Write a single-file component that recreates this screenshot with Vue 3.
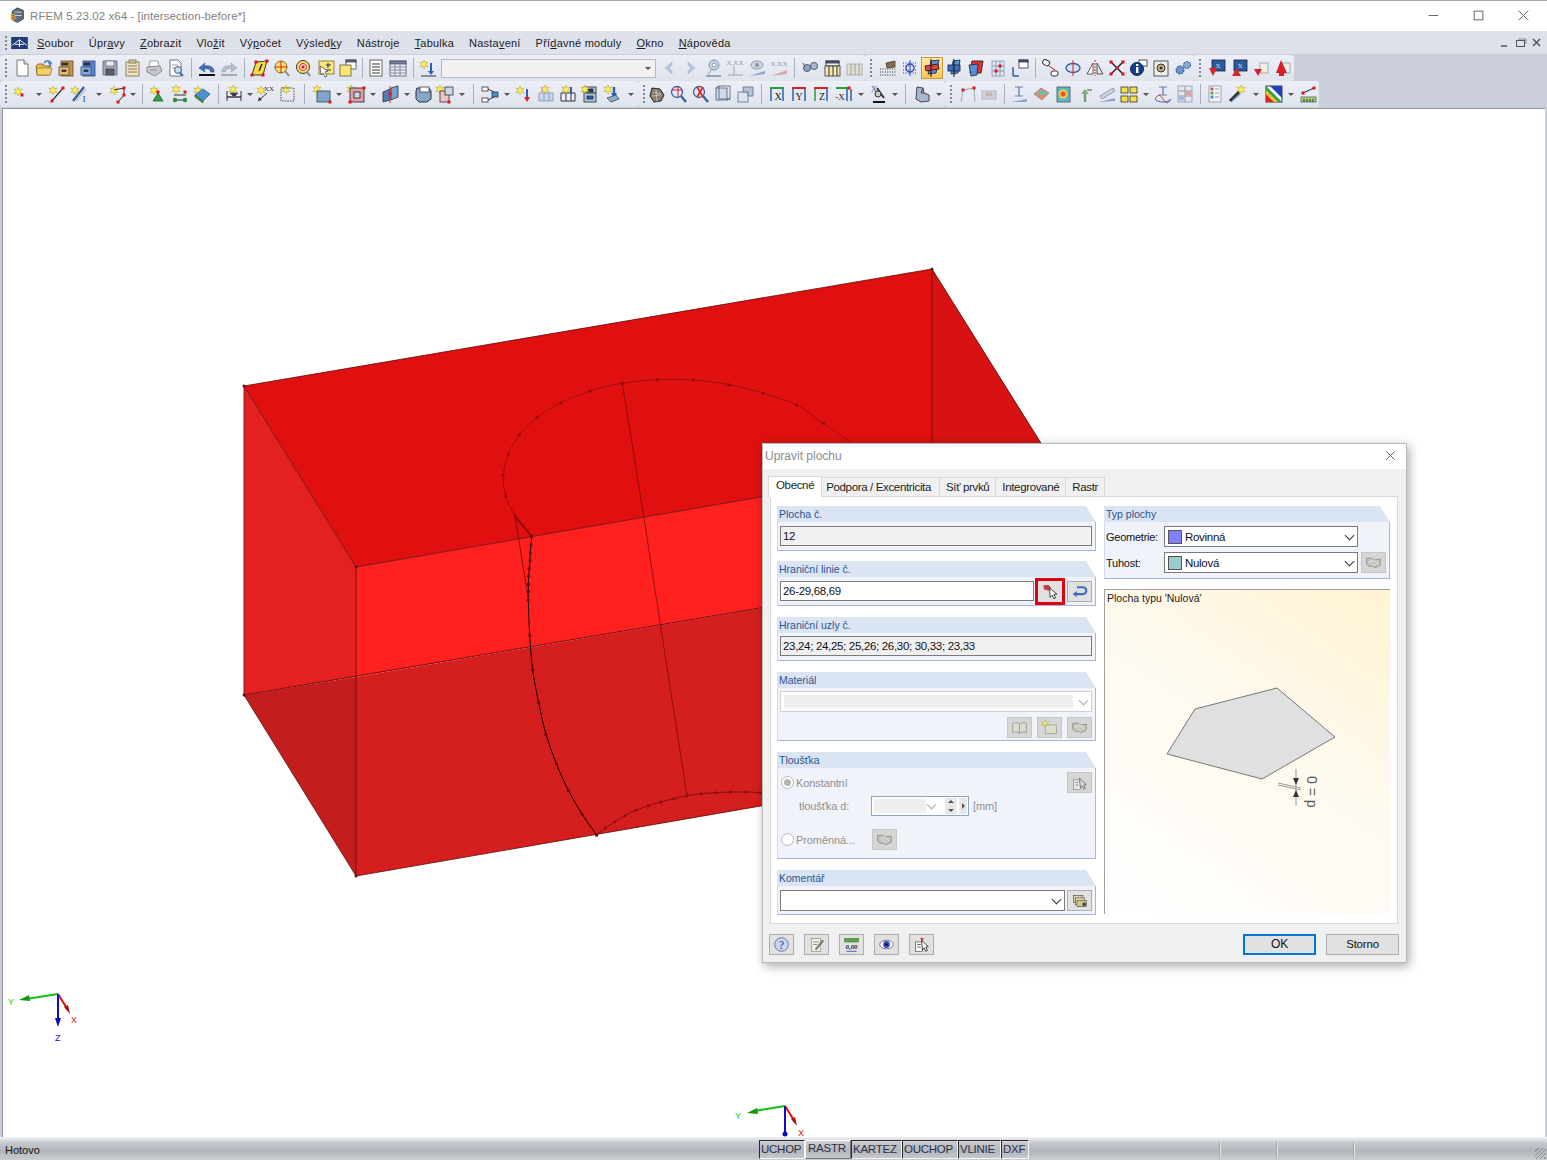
<script setup>
// helpers for the small toolbar pictures (20x20 box)
const st = (x, y) => `<path d="M${x} ${y - 4}l1.2 2.8 2.8-.8-1.6 2.4 1.6 2.4-2.8-.8-1.2 2.8-1.2-2.8-2.8.8 1.6-2.4-1.6-2.4 2.8.8z" fill="#ffee55" stroke="#a89a30" stroke-width=".5"/>`
const nd = (x, y) => `<rect x="${x - 1.5}" y="${y - 1.5}" width="3" height="3" fill="#e0141c"/>`
const txt = (x, y, t, c = '#333', s = 7) => `<text x="${x}" y="${y}" font-size="${s}" font-family="Liberation Serif" fill="${c}" text-anchor="middle">${t}</text>`
const ln = (a, b, c, d, col = '#333', w = 1) => `<line x1="${a}" y1="${b}" x2="${c}" y2="${d}" stroke="${col}" stroke-width="${w}"/>`
const box = (x, y, w, h, f, s = '#555') => `<rect x="${x}" y="${y}" width="${w}" height="${h}" fill="${f}" stroke="${s}" stroke-width=".8"/>`
const poly = (p, f, s = '#555') => `<polygon points="${p}" fill="${f}" stroke="${s}" stroke-width=".8"/>`
const hand = '<path d="M2 5h6l3 2 7-1v7l-6 3-4-2-2 1-4-3z" fill="#c4c4bc" stroke="#7c7c78"/><path d="M5 10l5-3 6 5M8 12l3 2" fill="none" stroke="#f2f2f2"/>'

const icons = {
  doc: '<path d="M5 2h7l4 4v12H5z" fill="#fff" stroke="#777"/><path d="M12 2v4h4" fill="#ddd" stroke="#777"/>',
  folder: '<path d="M2 8l2-2h5l1 2h6v9H3z" fill="#e8bc44" stroke="#94702a"/><path d="M3 10h15l-2 7H3z" fill="#f4d36a" stroke="#94702a" stroke-width=".7"/><path d="M10 5c2-3 5-3 7 0l-2 0 2 3" fill="none" stroke="#3f78c8" stroke-width="1.4"/>',
  drawer: box(5, 3, 12, 15, '#c09355', '#6e4a20') + box(3, 9, 10, 8, '#e2bb7c', '#6e4a20') + box(6, 5, 6, 2, '#333', '#333') + box(6, 12, 4, 1.5, '#333', '#333'),
  cabinet: box(5, 3, 12, 15, '#5b82c6', '#2d4d85') + box(3, 9, 10, 8, '#86a8e0', '#2d4d85') + box(6, 5, 6, 2, '#234', '#234') + box(6, 12, 4, 1.5, '#234', '#234'),
  save: box(3, 3, 14, 14, '#9ea8bd', '#5a6478') + box(6, 3, 8, 5, '#eee', '#777') + box(6, 11, 8, 6, '#555d70', '#444'),
  notes: box(4, 4, 13, 14, '#efe3c4', '#7a6a44') + box(7, 2, 7, 3, '#d0c6a8', '#7a6a44') + ln(6, 8, 15, 8, '#8a7a55') + ln(6, 11, 15, 11, '#8a7a55') + ln(6, 14, 15, 14, '#8a7a55'),
  print: poly('6,3 14,3 15,9 5,9', '#fff', '#888') + poly('3,9 16,8 18,13 11,18 3,14', '#c8c8d0', '#777') + ln(6, 12, 13, 12, '#888'),
  preview: '<path d="M4 2h8l3 3v13H4z" fill="#fff" stroke="#777"/>' + ln(6, 7, 12, 7, '#999') + ln(6, 10, 10, 10, '#999') + '<circle cx="12" cy="12" r="3.4" fill="#c6def5" stroke="#456"/>' + ln(14, 15, 17, 18, '#3a6ab0', 2),
  undo: '<path d="M17 14c0-5-4-7-10-6l1-3-6 5 6 4-1-3c4-1 6 0 7 3z" fill="#3f71bd" stroke="#27487c" stroke-width=".6"/>' + ln(2, 17, 18, 17, '#111', 2),
  redo: '<path d="M3 14c0-5 4-7 10-6l-1-3 6 5-6 4 1-3c-4-1-6 0-7 3z" fill="#b6c0d2" stroke="#8f99ac" stroke-width=".6"/>' + ln(2, 17, 18, 17, '#aaa', 2),
  para: poly('6,4 17,3 13,17 2,17', '#f3da48', '#111') + nd(6, 4) + nd(2, 17) + nd(13, 17) + nd(17, 3) + ln(9, 13, 12, 6, '#222', 1.4),
  target: '<circle cx="9" cy="9" r="6" fill="#f6e26a" stroke="#7a6a20"/>' + ln(3, 9, 15, 9, '#d22') + ln(9, 3, 9, 15, '#d22') + ln(13, 13, 17, 18, '#888', 2),
  target2: '<circle cx="9" cy="9" r="6.5" fill="#f6e26a" stroke="#333"/><circle cx="9" cy="9" r="3.5" fill="#fff" stroke="#c22"/>' + nd(9, 9) + ln(13, 14, 16, 18, '#888', 2),
  plus: box(3, 3, 15, 13, '#f6e77d', '#7a6a20') + ln(12, 5, 12, 10, '#333') + ln(10, 7, 15, 7, '#333') + ln(10, 12, 15, 12, '#333') + '<path d="M4 8l1 9 2-2 2 4 2-1-2-4 3-1z" fill="#fff" stroke="#333" stroke-width=".7"/>',
  windows: box(8, 2, 10, 9, '#fff', '#444') + box(8, 2, 10, 2, '#4a6fb0', '#444') + box(2, 7, 11, 11, '#f8e67c', '#6a5c20'),
  list: box(4, 2, 12, 16, '#fff', '#444') + ln(6, 6, 14, 6) + ln(6, 9, 14, 9) + ln(6, 12, 14, 12) + ln(6, 15, 14, 15),
  table: box(2, 3, 16, 15, '#eef', '#556') + box(2, 3, 16, 3, '#6f7f9f', '#556') + ln(2, 9, 18, 9, '#889') + ln(2, 12, 18, 12, '#889') + ln(2, 15, 18, 15, '#889') + ln(7, 6, 7, 18, '#889') + ln(12, 6, 12, 18, '#889'),
  starDown: st(6, 6) + ln(13, 5, 13, 14, '#2d5fb0', 2) + '<path d="M10 13h6l-3 4z" fill="#2d5fb0"/>' + ln(3, 18, 18, 18, '#333'),
  back: '<path d="M13 4l-7 6 7 6v-3l-3-3 3-3z" fill="#b9c8e4" stroke="#9fb1d2" stroke-width=".6"/>',
  fwd: '<path d="M7 4l7 6-7 6v-3l3-3-3-3z" fill="#b9c8e4" stroke="#9fb1d2" stroke-width=".6"/>',
  bubble: '<circle cx="11" cy="7" r="5" fill="#ccd8e8" stroke="#7e90ac"/><circle cx="11" cy="7" r="2" fill="#fff" stroke="#7e90ac"/>' + ln(3, 18, 18, 18, '#98a4b8', 2) + ln(9, 10, 5, 17, '#98a4b8'),
  xxDown: txt(10, 7, 'X.XX', '#8f96a3') + ln(9, 8, 9, 16, '#98a4b8') + ln(3, 17, 18, 17, '#98a4b8'),
  eyeLine: '<ellipse cx="10" cy="7" rx="6" ry="4" fill="#d0d7e2" stroke="#8d97a8"/><circle cx="10" cy="7" r="2" fill="#8a94a6"/><path d="M2 18l16-5v3z" fill="#8fa4d0"/>',
  xxLine: txt(10, 8, 'X.XX', '#8f96a3') + '<path d="M2 18l16-6v4z" fill="#d9a8a8"/>',
  glasses: '<circle cx="7" cy="10" r="3.5" fill="#8ea6c6" stroke="#556"/><circle cx="14" cy="8" r="3.5" fill="#a9bbd4" stroke="#556"/>' + ln(3, 5, 5, 9, '#556'),
  bars: box(4, 3, 13, 5, '#eee', '#333') + box(4, 3, 13, 2, '#3f5fa0', '#333') + box(3, 8, 15, 10, '#f4e8b0', '#333') + ln(7, 8, 7, 18) + ln(11, 8, 11, 18) + ln(15, 8, 15, 18),
  barsOff: box(3, 6, 15, 11, '#e4dfc8', '#9aa3b4') + ln(7, 6, 7, 17, '#9aa3b4') + ln(11, 6, 11, 17, '#9aa3b4') + ln(15, 6, 15, 17, '#9aa3b4'),
  dots: '<path d="M2 14h16M2 11h16M2 17h16" stroke="#333" stroke-dasharray="1 1.4"/>' + poly('8,5 17,3 17,9 9,10', '#8a6a50', '#4a3a2a'),
  gridDot: '<path d="M3 5h14M3 8h14M3 12h14M3 15h14" stroke="#2c3e7e" stroke-dasharray="1 1.4"/>' + '<circle cx="10" cy="10" r="4" fill="none" stroke="#2c4fc0" stroke-width="1.4"/>' + ln(10, 2, 10, 18, '#2c4fc0'),
  viewOn: poly('9,3 17,2 14,15 6,16', '#5c8dd6', '#123') + poly('3,8 16,6 17,11 4,13', '#e04040', '#111') + ln(9, 1, 9, 19, '#111'),
  viewA: poly('9,3 16,2 14,15 7,16', '#5c8dd6', '#123') + box(4, 7, 12, 6, '#3b6fc2', '#123') + ln(10, 1, 10, 19, '#111'),
  viewB: poly('6,3 17,3 15,15 4,15', '#e63434', '#111') + poly('3,7 12,6 11,17 5,18', '#5c8dd6', '#123'),
  gridRed: box(4, 3, 12, 15, '#dfe6f4', '#8a97b0') + ln(8, 3, 8, 18, '#8a97b0') + ln(12, 3, 12, 18, '#8a97b0') + ln(4, 8, 16, 8, '#8a97b0') + ln(4, 13, 16, 13, '#8a97b0') + nd(8, 13) + nd(12, 8),
  tag: box(9, 2, 9, 8, '#fff', '#334') + box(9, 2, 9, 2, '#3a5f9e', '#334') + '<path d="M3 18V9M3 18h6" stroke="#335f9e" stroke-width="1.5" fill="none"/>',
  chain: '<rect x="2" y="2" width="7" height="5" rx="2" transform="rotate(30 5 4)" fill="#fff" stroke="#333"/>' + '<rect x="10" y="13" width="7" height="5" rx="2" fill="#fff" stroke="#333"/>' + ln(8, 8, 14, 12, '#d22'),
  rotate: '<ellipse cx="10" cy="10" rx="7" ry="4.5" fill="#d5e0f0" stroke="#3a5fa8" stroke-width="1.4"/>' + ln(10, 2, 10, 18, '#d22'),
  mirror: poly('2,16 8,5 8,16', '#fff', '#333') + poly('12,5 18,16 12,16', '#dce2ee', '#333') + '<path d="M10 2v16" stroke="#d22" stroke-dasharray="2 1"/>',
  cross: ln(4, 4, 16, 16, '#111', 1.2) + ln(16, 4, 4, 16, '#111', 1.2) + nd(4, 4) + nd(16, 4) + nd(4, 16) + nd(16, 16) + nd(10, 10),
  info: box(10, 2, 8, 6, '#fff', '#333') + '<circle cx="8" cy="11" r="6.5" fill="#123f8e" stroke="#0c2a60"/><rect x="7" y="9" width="2.4" height="6" fill="#fff"/><rect x="7" y="6" width="2.4" height="2" fill="#fff"/>',
  gear: box(3, 3, 14, 15, '#eee', '#333') + '<circle cx="10" cy="10" r="4" fill="#d0b070" stroke="#333"/><circle cx="10" cy="10" r="1.5" fill="#335"/>',
  gears: '<circle cx="7" cy="12" r="4" fill="#6f93c8" stroke="#2d4a80" stroke-dasharray="2 1"/><circle cx="14" cy="7" r="3.5" fill="#8ba8d6" stroke="#2d4a80" stroke-dasharray="2 1"/>',
  load1: box(5, 2, 13, 11, '#2c5aa0', '#123') + txt(11, 10, 'X', '#cde') + '<path d="M2 10h8l-4 8z" fill="#e0202a"/>',
  load2: box(5, 2, 13, 11, '#2c5aa0', '#123') + txt(11, 10, 'X', '#cde') + '<path d="M3 18h9l-4.500-8z" fill="#e0202a"/>',
  redA: box(9, 5, 8, 10, '#f2efe6', '#999') + '<path d="M8 2v9h-5l4 7 4-7h-3z" fill="#d91e26"/>',
  redB: box(9, 5, 8, 10, '#f2efe6', '#999') + '<path d="M8 2l-5 13h3v3h5v-3h3z" fill="#d91e26"/>',

  node: st(7, 7) + nd(11, 11),
  lineS: st(6, 6) + ln(5, 17, 16, 4, '#333', 1.2) + nd(5, 17) + nd(16, 4),
  member: st(6, 6) + ln(4, 17, 15, 3, '#3f5f98', 2.4) + ln(7, 17, 17, 5, '#9ab', 1) + txt(15, 18, 'I', '#234', 8),
  polyl: st(6, 6) + '<path d="M6 6l10-2v7l-6 7" fill="none" stroke="#333"/>' + nd(16, 4) + nd(16, 11) + nd(10, 18),
  support: st(6, 6) + poly('5,17 10,9 15,17', '#38a048', '#1c6028') + nd(10, 8),
  tree: st(6, 5) + ln(4, 11, 16, 11) + ln(5, 16, 15, 16) + '<circle cx="5" cy="16" r="2.2" fill="#2e8c3e"/><circle cx="15" cy="16" r="2.2" fill="#2e8c3e"/>' + nd(15, 8),
  greenS: st(6, 6) + poly('3,11 11,5 18,10 11,17', '#4f90d0', '#2c5a84') + poly('3,11 11,17 11,19 3,13', '#4aa048', '#2c6a30'),
  dim: st(9, 5) + ln(3, 7, 3, 17) + ln(17, 7, 17, 17) + ln(3, 13, 17, 13, '#111', 1.2) + poly('6,9 14,9 10,13', '#333'),
  xx: st(6, 6) + txt(14, 7, 'XX') + ln(3, 17, 12, 9) + '<path d="M3 17l1-4 3 3z" fill="#333"/>',
  dotted: st(9, 5) + '<rect x="4" y="4" width="13" height="13" fill="none" stroke="#444" stroke-dasharray="1.4 1.2"/>',
  surfS: st(5, 5) + box(5, 7, 13, 11, '#7ea6c8', '#345') + nd(18, 18),
  holeS: st(5, 5) + box(4, 4, 14, 14, '#e2a0a0', '#223') + box(8, 8, 6, 6, '#c9d6e8', '#223') + nd(4, 18) + nd(18, 4),
  blueS: poly('3,8 10,5 10,16 3,18', '#4f7fb8', '#234') + poly('11,4 18,2 18,13 11,16', '#7aa0cc', '#234') + nd(10, 10) + ln(10, 2, 10, 19, '#d22'),
  solid: '<path d="M4 4h12l2 3v8l-4 3H6l-3-3V7z" fill="#8aa4c6" stroke="#234"/>' + box(7, 3, 9, 5, '#fff', '#345'),
  solids: st(5, 5) + box(5, 7, 9, 11, '#e8c4c4', '#333') + box(10, 3, 8, 8, '#cdd8e8', '#333') + nd(14, 18),
  flow: box(2, 3, 6, 4, '#fff', '#333') + box(2, 14, 6, 4, '#fff', '#333') + box(12, 8, 6, 5, '#4a90d8', '#234') + ln(8, 5, 14, 8) + ln(8, 16, 14, 13),
  arrowS: st(6, 6) + ln(13, 5, 13, 15, '#2d5fb0', 2) + '<path d="M10 13h6l-3 5z" fill="#d22"/>',
  gridG: '<path d="M3 9h14v8H3zM8 9v8M13 9v8" fill="#ccd6e8" stroke="#8ea0c0"/>' + st(9, 5) + ln(6, 3, 6, 9, '#e09a9a'),
  grid: '<path d="M3 9h14v8H3zM8 9v8M13 9v8" fill="#eef" stroke="#334"/>' + st(8, 5) + ln(13, 3, 13, 9, '#2d5fb0', 2),
  frame: box(4, 3, 12, 15, '#b8c6dc', '#223') + ln(4, 9, 16, 9, '#223') + box(7, 5, 6, 3, '#234', '#234') + box(7, 12, 6, 3, '#2d5fb0', '#234') + st(5, 5),
  loadB: st(6, 5) + ln(12, 3, 12, 11, '#2d5fb0', 2.4) + '<path d="M9 9h6l-3 5z" fill="#2d5fb0"/>' + poly('5,14 14,11 17,15 9,18', '#8fb0d0', '#345'),
  tool: '<path d="M5 4l8 1 4 6-3 6-7 1-4-6z" fill="#8b7a6e" stroke="#222"/><path d="M6 8l8 2M5 12l9-1M9 5l1 13" stroke="#ddd" stroke-width=".6"/>',
  zoomR: '<circle cx="8" cy="8" r="5.5" fill="#dfe9f6" stroke="#3a5f9e" stroke-width="1.3"/>' + ln(12, 12, 17, 18, '#3a5f9e', 2.4) + ln(3, 6, 13, 6, '#d22') + ln(9, 2, 9, 13, '#d22'),
  zoomX: '<circle cx="8" cy="8" r="5.5" fill="#dfe9f6" stroke="#3a5f9e" stroke-width="1.3"/>' + ln(12, 12, 17, 18, '#3a5f9e', 2.4) + ln(6, 3, 12, 13, '#d22', 1.6) + ln(12, 3, 6, 13, '#d22', 1.6),
  cube: box(3, 4, 11, 12, '#cfd9e8', '#4d5e78') + box(6, 2, 11, 13, 'none', '#4d5e78') + ln(3, 4, 6, 2, '#4d5e78') + ln(14, 16, 17, 15, '#4d5e78'),
  cubes: box(3, 8, 10, 10, '#dde4f0', '#5c6c85') + poly('8,3 18,3 18,12 13,12 13,8 8,8', '#b4c2d8', '#5c6c85'),
  axX: '<path d="M4 17V5M16 17V5" stroke="#2d5fb0" stroke-width="1.5"/><path d="M3 4h14" stroke="#2a9e3a" stroke-width="2"/>' + txt(11, 16, 'X', '#222', 10),
  axY: '<path d="M4 17V5M16 17V5" stroke="#2d5fb0" stroke-width="1.5"/><path d="M3 4h14" stroke="#d22" stroke-width="2"/>' + txt(10, 16, 'Y', '#222', 10),
  axZ: '<path d="M4 17V5" stroke="#2a9e3a" stroke-width="1.5"/><path d="M16 17V5" stroke="#2d5fb0" stroke-width="1.5"/><path d="M3 4h14" stroke="#d22" stroke-width="2"/>' + txt(11, 16, 'Z', '#222', 10),
  axNeg: '<path d="M14 17V5M18 17V5" stroke="#2d5fb0" stroke-width="1.5"/><path d="M3 4h14" stroke="#2a9e3a" stroke-width="2"/>' + txt(7, 16, '-X', '#222', 9) + nd(16, 4),
  iso: txt(6, 8, 'X', '#2d5fb0', 9) + ln(9, 4, 16, 14, '#333', 2) + ln(5, 18, 17, 18, '#111', 2) + '<circle cx="10" cy="10" r="3" fill="#ccc" stroke="#333"/>',
  shape3d: '<path d="M5 3l6 1 1 5 5 2v6l-8 1-5-3z" fill="#a8b8cc" stroke="#445"/><path d="M11 4l-2 5 3 0" fill="none" stroke="#445"/>',
  gateG: '<path d="M4 18L6 6l11-2 1 14" fill="none" stroke="#9aa"/>' + nd(6, 6) + nd(17, 4),
  pillG: box(3, 7, 14, 8, '#d0d4dc', '#aab') + box(7, 9, 6, 3, '#d9a8a8', '#bbb'),
  lineT: ln(10, 3, 10, 12, '#6a84b0', 1.4) + ln(6, 3, 14, 3, '#6a84b0') + ln(6, 12, 14, 12, '#6a84b0') + '<path d="M2 18l16-3v3z" fill="#8aa4d8"/>',
  fill: poly('3,10 10,4 18,9 11,16', '#f08a5a', '#6a90c0') + '<ellipse cx="11" cy="9" rx="4" ry="2.500" fill="#6fc0a0"/>',
  cubeC: box(4, 3, 13, 15, '#5fb8c8', '#456') + '<circle cx="10" cy="10" r="4.500" fill="#f0d040"/><circle cx="10" cy="10" r="2.500" fill="#e85030"/>',
  arrG: '<path d="M10 18V9" stroke="#7a9a7a" stroke-width="2.500"/><path d="M6 10l4-5 4 5z" fill="#7ab07a"/><path d="M12 6h5" stroke="#88a888" stroke-width="2"/>',
  slant: '<path d="M2 18l16-4v3z" fill="#8aa4d8"/>' + poly('3,12 16,4 18,7 5,15', '#c6d2e2', '#7c8ca6'),
  yellow4: box(2, 3, 7, 6, '#f4e04a', '#333') + box(11, 3, 7, 6, '#f4e04a', '#333') + box(2, 12, 7, 6, '#f4e04a', '#333') + box(11, 12, 7, 6, '#f4e04a', '#333'),
  sine: ln(10, 3, 10, 11, '#6a84b0', 1.4) + ln(6, 3, 14, 3, '#6a84b0') + ln(6, 11, 14, 11, '#6a84b0') + '<path d="M2 15c3-5 5-5 8 0s5 5 8 0" fill="none" stroke="#d04040"/>' + '<path d="M2 15c3 4 13 4 16 0" fill="none" stroke="#4060c0"/>',
  tableC: box(3, 2, 14, 16, '#e4e8ee', '#8f99aa') + ln(3, 7, 17, 7, '#8f99aa') + ln(3, 12, 17, 12, '#8f99aa') + ln(10, 2, 10, 18, '#8f99aa') + box(11, 8, 5, 3, '#e0a0a0', '#e0a0a0') + box(4, 13, 5, 3, '#a0b8e0', '#a0b8e0'),
  legend: box(4, 2, 12, 16, '#f4f4f4', '#8a94a4') + box(6, 4, 2, 2, '#d44', '#d44') + box(6, 8, 2, 2, '#4a4', '#4a4') + box(6, 12, 2, 2, '#48c', '#48c') + ln(10, 5, 14, 5, '#999') + ln(10, 9, 14, 9, '#999') + ln(10, 13, 14, 13, '#999'),
  pencil: st(14, 5) + ln(3, 17, 12, 8, '#333', 3) + ln(5, 17, 13, 10, '#6a90c8', 1.4),
  rainbow: box(2, 2, 16, 16, '#fff', '#111') + poly('2,18 2,10 10,18', '#e02020', 'none') + poly('2,10 2,6 14,18 10,18', '#f0c020', 'none') + poly('2,6 2,2 18,18 14,18', '#30a040', 'none') + poly('6,2 18,2 18,14', '#2040c0', 'none'),
  ruler: box(3, 13, 15, 5, '#a8d070', '#567') + ln(5, 9, 16, 4, '#222') + nd(5, 9) + nd(16, 4) + ln(6, 15, 6, 18) + ln(9, 15, 9, 18) + ln(12, 15, 12, 18) + ln(15, 15, 15, 18),

  // tlacitka v dialogu
  pick: '<path d="M2 3l6 0 2 3-3 3-2-2-2 1z" fill="#d2303e" stroke="#a02a34" stroke-width=".6"/>' + '<path d="M9 6l.5 11 2.500-2.500 2 4 2-1-2-4 3.500-.5z" fill="#fff" stroke="#222"/>',
  loop: '<path d="M7 5h7a3.500 3.500 0 0 1 0 8H5" fill="none" stroke="#3f6cc4" stroke-width="2.600"/><path d="M7 9.500l-5 3.500 5 3.500z" fill="#3f6cc4"/>',
  book: '<path d="M2 5c3-1 6-1 8 1 2-2 5-2 8-1v11c-3-1-6-1-8 1-2-2-5-2-8-1z" fill="#dcdcd0" stroke="#8a8a80"/>' + ln(10, 6, 10, 17, '#8a8a80'),
  newWin: st(5, 5) + box(5, 7, 13, 10, '#dedfc8', '#888'),
  hand,
  pickDoc: box(3, 7, 8, 11, '#eee', '#777') + ln(5, 10, 9, 10, '#777') + ln(5, 13, 9, 13, '#777') + '<path d="M10 5l1 11 2-2 2 4 2-1-2-4 3-.5z" fill="#ddd" stroke="#555"/>',
  pickDocOn: box(3, 7, 8, 11, '#fff', '#444') + ln(5, 10, 9, 10, '#444') + ln(5, 13, 9, 13, '#444') + '<path d="M10 5l1 11 2-2 2 4 2-1-2-4 3-.5z" fill="#fff" stroke="#222"/>' + '<path d="M8 2l5 1-2 3z" fill="#d22"/>',
  stack: box(3, 4, 11, 8, '#d8d0a0', '#555') + box(5, 7, 11, 8, '#e2dcae', '#555') + box(7, 10, 11, 7, '#d0c888', '#555') + box(14, 13, 3, 3, '#444', '#444'),
  help: '<circle cx="10" cy="10" r="8" fill="#c8d8f0" stroke="#4f6aa8"/>' + txt(10, 15, '?', '#1b3a80', 14),
  editDoc: box(4, 3, 11, 15, '#f0f0e0', '#888') + ln(6, 7, 13, 7, '#888') + ln(6, 10, 11, 10, '#888') + ln(9, 16, 18, 5, '#777', 2.400),
  zero: box(2, 3, 16, 4, '#5aa84c', '#3e7a34') + `<text x="10" y="15" font-size="8" font-weight="bold" font-style="italic" font-family="Liberation Serif" fill="#223" text-anchor="middle">0,00</text>` + ln(4, 18, 16, 18, '#2d4fc0'),
  eye: '<ellipse cx="10" cy="10" rx="8" ry="5" fill="#fff" stroke="#667"/><circle cx="10" cy="10" r="4" fill="#3450c8"/><circle cx="10" cy="10" r="1.600" fill="#111"/>',
  app: '<path d="M11 1l7 3v10l-7 4-6-3V5z" fill="#5f6f7c" stroke="#2c3640"/><path d="M8 6h8M8 10h8" stroke="#dde"/>' + `<text x="6" y="15" font-size="11" font-weight="bold" font-family="Liberation Sans" fill="#e0a020" text-anchor="middle">5</text>`
}

// polozky lisht: nazev = ikona, | = oddelovac, v = sipka, g = uchyt, cislo = sirka
const row1 = [
  ['g11', 'doc', 'folder', 'drawer', 'cabinet', 'save', 'notes', 'print', 'preview', '|9', 'undo', 'redo', '|9', 'para', 'target', 'target2', 'plus', 'windows', '|6', 'list', 'table', '|8', 'starDown', 'COMBO', 'back', 'fwd', 'bubble', 'xxDown', 'eyeLine', 'xxLine', '|9', 'glasses', 'bars', 'barsOff'],
  ['g12', 'dots', 'gridDot', '*viewOn', 'viewA', 'viewB', 'gridRed', 'tag', '|9', 'chain', 'rotate', 'mirror', 'cross', 'info', 'gear', 'gears'],
  ['g12', 'load1', 'load2', 'redA', 'redB']
]
const row2 = [
  ['g10', 'node', 'v14', 'lineS', 'member', 'v17', 'polyl', 'v8', '|10', 'support', 'tree', 'greenS', '|10', 'dim', 'v9', 'xx', 'dotted', '|13', 'surfS', 'v12', 'holeS', 'v12', 'blueS', 'v11', 'solid', 'solids', 'v12', '|11', 'flow', 'v12', 'arrowS', 'gridG', 'grid', 'frame', 'loadB', 'v15'],
  ['g8', 'tool', 'zoomR', 'zoomX', 'cube', 'cubes', '|10', 'axX', 'axY', 'axZ', 'axNeg', 'v13', 'iso', 'v11', '|11', 'shape3d', 'v12'],
  ['g11', 'gateG', 'pillG', '|8', 'lineT', 'fill', 'cubeC', 'arrG', 'slant', 'yellow4', 'v12', 'sine', 'tableC', '|8', 'legend', 'pencil', 'v15', 'rainbow', 'v12', 'ruler']
]

function parseItem(s) {
  const n = parseInt(s.slice(1))
  if (s[0] === '|') return { type: 'sep', w: n }
  if (s[0] === 'g' && n) return { type: 'grip', w: n }
  if (s[0] === 'v' && n) return { type: 'dd', w: n }
  if (s === 'COMBO') return { type: 'combo' }
  if (s[0] === '*') return { type: 'icon', name: s.slice(1), on: true }
  return { type: 'icon', name: s }
}
const toolbars = [row1, row2].map(r => r.map(g => g.map(parseItem)))

const menu = [
  ['', 'S', 'oubor'], ['Úpr', 'a', 'vy'], ['', 'Z', 'obrazit'], ['Vlo', 'ž', 'it'], ['Vý', 'p', 'očet'], ['Výsled', 'k', 'y'],
  ['Nástro', 'j', 'e'], ['', 'T', 'abulka'], ['Nasta', 'v', 'ení'], ['Pří', 'd', 'avné moduly'], ['', 'O', 'kno'], ['', 'N', 'ápověda']
]

const tabs = ['Podpora / Excentricita', 'Síť prvků', 'Integrované', 'Rastr']
const flags = ['UCHOP', 'RASTR', 'KARTEZ', 'OUCHOP', 'VLINIE', 'DXF']
const dialogButtons = ['help', 'editDoc', 'zero', 'eye', 'pickDocOn']

// model - souradnice z vyrezu (3x) prevedene na stranku
const z = ([x, y]) => [480 + x / 3, 370 + y / 3]
const arc = [[105, 438], [77, 378], [70, 315], [85, 253], [118, 195], [172, 142], [243, 98], [330, 63], [427, 40], [532, 29], [640, 30], [748, 44], [850, 70], [950, 105], [1030, 160], [1110, 215]]
const front = [[155, 500], [153, 525], [151, 548], [150, 572], [148, 595], [146, 618], [145, 643], [145, 665], [145, 690], [149, 796], [158, 900], [176, 998], [198, 1093], [229, 1181], [265, 1261], [306, 1332], [350, 1395]]
const bottom = [[350, 1395], [376, 1374], [405, 1355], [435, 1337], [468, 1321], [505, 1307], [542, 1296], [581, 1286], [621, 1277], [664, 1271], [708, 1268], [752, 1266], [797, 1266], [840, 1268]]
const seam = [[427, 40], [492, 445], [541, 763], [621, 1277]]

// hladka krivka pres body (catmull-rom)
function smooth(list) {
  const p = list.map(z)
  let d = `M${p[0][0]} ${p[0][1]}`
  for (let i = 0; i < p.length - 1; i++) {
    const a = p[i - 1] || p[i]
    const b = p[i]
    const c = p[i + 1]
    const e = p[i + 2] || c
    d += `C${b[0] + (c[0] - a[0]) / 6} ${b[1] + (c[1] - a[1]) / 6} ${c[0] - (e[0] - b[0]) / 6} ${c[1] - (e[1] - b[1]) / 6} ${c[0]} ${c[1]}`
  }
  return d
}
const arcLine = smooth(arc)
const frontLine = smooth(front)
const bottomLine = smooth(bottom)
const seamLine = smooth(seam)
const arcDots = arc.slice(0, 15).map(z)
const frontDots = front.map(z)
const bottomDots = bottom.map(z)
</script>

<template>
  <div class="app">
    <!-- titulek okna -->
    <div class="titlebar">
      <svg class="appicon" viewBox="0 0 20 20" v-html="icons.app"></svg>
      <span class="title">RFEM 5.23.02 x64 - [intersection-before*]</span>
      <div class="winbtns">
        <svg viewBox="0 0 46 30"><path d="M18 15h10" stroke="#666" /></svg>
        <svg viewBox="0 0 46 30"><rect x="18.500" y="10.500" width="9" height="9" fill="none" stroke="#666" /></svg>
        <svg viewBox="0 0 46 30"><path d="M18 10l10 10M28 10l-10 10" stroke="#666" /></svg>
      </div>
    </div>

    <!-- menu -->
    <div class="menubar">
      <span class="grip small"></span>
      <svg class="menulogo" viewBox="0 0 18 13">
        <rect width="18" height="13" fill="#1d3c78" />
        <path d="M1 9l8-6 8 6M9 3v8M4 8h10" stroke="#fff" fill="none" />
      </svg>
      <span v-for="(m, i) in menu" :key="i" class="menuitem">{{ m[0] }}<u>{{ m[1] }}</u>{{ m[2] }}</span>
      <div class="mdibtns">
        <svg viewBox="0 0 14 12"><path d="M3 9h6" stroke="#555" stroke-width="1.500" /></svg>
        <svg viewBox="0 0 14 12"><rect x="2.500" y="3.500" width="8" height="6" fill="none" stroke="#555" /><path d="M4 2h8v5" fill="none" stroke="#888" /></svg>
        <svg viewBox="0 0 14 12"><path d="M3 2l7 7M10 2l-7 7" stroke="#555" stroke-width="1.500" /></svg>
      </div>
    </div>

    <!-- lista nastroju -->
    <div v-for="(row, r) in toolbars" :key="r" class="toolrow">
      <div v-for="(group, g) in row" :key="g" class="toolgroup">
        <template v-for="(item, i) in group" :key="i">
          <span v-if="item.type === 'grip'" class="gripbox" :style="{ width: item.w + 'px' }"><span class="grip"></span></span>
          <span v-else-if="item.type === 'sep'" class="sep" :style="{ width: item.w + 'px' }"></span>
          <span v-else-if="item.type === 'dd'" class="dd" :style="{ width: item.w + 'px' }"></span>
          <span v-else-if="item.type === 'combo'" class="combo"><i></i></span>
          <span v-else class="tool" :class="{ on: item.on }">
            <svg viewBox="0 0 20 20" v-html="icons[item.name]"></svg>
          </span>
        </template>
      </div>
    </div>

    <div class="canvas">
      <!-- 3D model -->
      <svg class="model" viewBox="3 109 1543 1028">
        <polygon points="244,386 932,269 1044,448 356,567" fill="#e01010" />
        <polygon points="932,269 1044,448 932,467" fill="#d81212" />
        <polygon points="244,386 356,567 356,677 244,695" fill="#e42020" />
        <polygon points="244,695 356,677 356,876" fill="#c31d1d" />
        <polygon points="356,567 1044,448 1044,560 356,677" fill="#ff2020" />
        <polygon points="356,677 1044,560 1044,757 356,876" fill="#d51e1e" />
        <g stroke="#5c0a0a" stroke-width=".8" fill="none">
          <path d="M244 386L932 269L1044 448M244 386L356 567L1044 448M244 386V695L356 876V567M244 695L1044 560M356 876L1044 757M932 269V467" />
          <path :d="arcLine" stroke="#8f0c0c" />
          <path :d="seamLine" stroke="#7a0c0c" />
          <path :d="bottomLine" stroke="#6d0a0a" />
          <path :d="frontLine" stroke="#120000" stroke-width="1" />
          <path d="M515 516L528 597" stroke="#6d0a0a" />
          <path d="M515 516L532 537" stroke="#8f0c0c" stroke-width="2" />
        </g>
        <g fill="#8c0c0c">
          <circle v-for="(p, i) in arcDots" :key="'a' + i" :cx="p[0]" :cy="p[1]" r="1.500" />
          <circle v-for="(p, i) in bottomDots" :key="'b' + i" :cx="p[0]" :cy="p[1]" r="1.500" />
        </g>
        <g fill="#6a0808">
          <circle v-for="(p, i) in frontDots" :key="'f' + i" :cx="p[0]" :cy="p[1]" r="1.600" />
          <circle cx="244" cy="386" r="1.500" />
          <circle cx="932" cy="269" r="1.500" />
          <circle cx="356" cy="567" r="1.500" />
          <circle cx="244" cy="695" r="1.500" />
          <circle cx="356" cy="876" r="1.500" />
        </g>

        <!-- osy vlevo dole -->
        <g font-family="Liberation Sans" font-size="9">
          <path d="M58 994L26 999" stroke="#12c012" stroke-width="2" />
          <path d="M19 1000l10-5 1 6z" fill="#0a9a0a" />
          <path d="M58 994L68 1010" stroke="#e01010" stroke-width="2" />
          <path d="M70 1014l-6-7 4-2z" fill="#a80c0c" />
          <path d="M58 994v26" stroke="#0a0ad0" stroke-width="2" />
          <path d="M55 1018h6l-3 9z" fill="#0a0ac0" />
          <text x="8" y="1005" fill="#10d010">Y</text>
          <text x="71" y="1023" fill="#e01010">X</text>
          <text x="55" y="1041" fill="#1010e0">Z</text>
        </g>
        <!-- osy dole uprostred -->
        <g font-family="Liberation Sans" font-size="9">
          <path d="M785 1106L754 1111" stroke="#12c012" stroke-width="2" />
          <path d="M747 1113l10-5 1 6z" fill="#0a9a0a" />
          <path d="M785 1106L795 1122" stroke="#e01010" stroke-width="2" />
          <path d="M797 1126l-6-7 4-2z" fill="#a80c0c" />
          <path d="M785 1106v28" stroke="#0a0ad0" stroke-width="2" />
          <circle cx="785" cy="1134" r="2.500" fill="#0a0ac0" />
          <text x="735" y="1119" fill="#10d010">Y</text>
          <text x="798" y="1136" fill="#e01010">X</text>
        </g>
      </svg>

      <!-- dialog -->
      <div class="dialog">
        <div class="dlgtitle">
          <span>Upravit plochu</span>
          <svg viewBox="0 0 12 12"><path d="M1.500 1.500l9 9M10.500 1.500l-9 9" stroke="#555" /></svg>
        </div>
        <div class="tabs">
          <span class="tab active">Obecné</span>
          <span v-for="t in tabs" :key="t" class="tab">{{ t }}</span>
        </div>
        <div class="panel">
          <div class="left">
            <div class="group first">
              <div class="ghead">Plocha č.</div>
              <div class="gbody"><div class="field ro">12</div></div>
            </div>
            <div class="group">
              <div class="ghead">Hraniční linie č.</div>
              <div class="gbody linie">
                <div class="field grow">26-29,68,69</div>
                <span class="redframe"><span class="ibtn on"><svg viewBox="0 0 20 20" v-html="icons.pick"></svg></span></span>
                <span class="ibtn on"><svg viewBox="0 0 20 20" v-html="icons.loop"></svg></span>
              </div>
            </div>
            <div class="group">
              <div class="ghead">Hraniční uzly č.</div>
              <div class="gbody short"><div class="field ro">23,24; 24,25; 25,26; 26,30; 30,33; 23,33</div></div>
            </div>
            <div class="group">
              <div class="ghead">Materiál</div>
              <div class="gbody mat">
                <div class="select off"><span class="selfill"></span><i class="chev"></i></div>
                <div class="btnrow">
                  <span class="ibtn"><svg viewBox="0 0 20 20" v-html="icons.book"></svg></span>
                  <span class="ibtn"><svg viewBox="0 0 20 20" v-html="icons.newWin"></svg></span>
                  <span class="ibtn"><svg viewBox="0 0 20 20" v-html="icons.hand"></svg></span>
                </div>
              </div>
            </div>
            <div class="group">
              <div class="ghead">Tloušťka</div>
              <div class="gbody thick">
                <div class="thickrow">
                  <span class="radio checked"></span>
                  <span class="muted">Konstantní</span>
                  <span class="ibtn push"><svg viewBox="0 0 20 20" v-html="icons.pickDoc"></svg></span>
                </div>
                <div class="thickrow sub">
                  <span class="muted dlabel">tloušťka d:</span>
                  <span class="spin">
                    <span class="spinfill"></span>
                    <i class="chev"></i>
                    <span class="spinbtns"><b class="up"></b><b class="down"></b></span>
                    <span class="spinright"></span>
                  </span>
                  <span class="muted">[mm]</span>
                </div>
                <div class="thickrow var">
                  <span class="radio"></span>
                  <span class="muted varlabel">Proměnná...</span>
                  <span class="ibtn"><svg viewBox="0 0 20 20" v-html="icons.hand"></svg></span>
                </div>
              </div>
            </div>
            <div class="group">
              <div class="ghead">Komentář</div>
              <div class="gbody linie">
                <div class="select grow"><i class="chev dark"></i></div>
                <span class="ibtn on"><svg viewBox="0 0 20 20" v-html="icons.stack"></svg></span>
              </div>
            </div>
          </div>

          <div class="right">
            <div class="group">
              <div class="ghead">Typ plochy</div>
              <div class="gbody typ">
                <div class="typrow">
                  <label>Geometrie:</label>
                  <div class="select wide"><span class="swatch violet"></span>Rovinná<i class="chev dark"></i></div>
                </div>
                <div class="typrow">
                  <label>Tuhost:</label>
                  <div class="select wide"><span class="swatch teal"></span>Nulová<i class="chev dark"></i></div>
                  <span class="ibtn"><svg viewBox="0 0 20 20" v-html="icons.hand"></svg></span>
                </div>
              </div>
            </div>
            <div class="preview">
              <span class="prevtext">Plocha typu 'Nulová'</span>
              <svg class="prevpic" viewBox="1104 589 286 325">
                <polygon points="1195,709 1277,688 1335,737 1262,779 1167,754" fill="#e0e0e0" stroke="#777" />
                <path d="M1296 769v37M1278 783l23 5M1278 785l23 5" stroke="#999" fill="none" />
                <path d="M1293 778h6l-3 7zM1293 797h6l-3-7z" fill="#333" />
                <text x="1307" y="776" transform="rotate(90 1307 776)" font-family="Liberation Sans" font-size="14" fill="#555">0 = p</text>
              </svg>
            </div>
          </div>
        </div>
        <div class="dlgfoot">
          <span v-for="b in dialogButtons" :key="b" class="ibtn foot"><svg viewBox="0 0 20 20" v-html="icons[b]"></svg></span>
          <span class="spacer"></span>
          <span class="pbtn primary">OK</span>
          <span class="pbtn">Storno</span>
        </div>
      </div>
    </div>

    <!-- stavovy radek -->
    <div class="statusbar">
      <span class="ready">Hotovo</span>
      <div class="flags">
        <span v-for="f in flags" :key="f" class="flag" :class="{ up: f === 'RASTR', ['f-' + f]: true }">{{ f }}</span>
      </div>
      <span class="cell c1"></span>
      <span class="cell c2"></span>
      <span class="cell c3"></span>
      <span class="resize"></span>
    </div>
  </div>
</template>

<style scoped>
.app {
  width: 1547px;
  height: 1160px;
  display: flex;
  flex-direction: column;
  overflow: hidden;
  background: #c9ced8;
  font-family: "Liberation Sans", Arial, sans-serif;
  font-size: 11.5px;
  color: #111;
}

/* titulek */
.titlebar {
  height: 29px;
  flex: none;
  background: #fff;
  border-top: 1px solid #a6a6a6;
  display: flex;
  align-items: center;
  position: relative;
  padding-bottom: 1px;
  box-sizing: content-box;
  margin-bottom: -1px;
}
.appicon {
  width: 17px;
  height: 17px;
  margin-left: 8px;
  overflow: visible;
}
.title {
  margin-left: 5px;
  color: #7f7f7f;
  font-size: 11.5px;
  letter-spacing: 0.08px;
}
.winbtns {
  margin-left: auto;
  margin-right: 1px;
  display: flex;
}
.winbtns svg {
  width: 45px;
  height: 29px;
}

/* menu */
.menubar {
  height: 24px;
  flex: none;
  display: flex;
  align-items: center;
  box-sizing: border-box;
  padding-top: 2px;
  background: #dde1ea;
}
.menulogo {
  width: 17px;
  height: 12px;
  margin: 0 9px 0 4px;
}
.menuitem {
  margin-right: 15px;
  font-size: 11px;
  letter-spacing: 0.22px;
  color: #222;
}
.mdibtns {
  margin-left: auto;
  margin-right: 3px;
  display: flex;
  gap: 2px;
}
.mdibtns svg {
  width: 14px;
  height: 12px;
}

/* lista nastroju */
.toolrow {
  height: 26px;
  flex: none;
  display: flex;
}
.toolrow:nth-of-type(3) {
  margin-top: 1px;
}
.toolrow:nth-of-type(4) {
  height: 27px;
}
.toolgroup {
  display: flex;
  align-items: center;
  height: 26px;
  background: linear-gradient(#eceff6, #dfe3ec);
  border-radius: 3px;
}
.gripbox {
  height: 20px;
  box-sizing: border-box;
  display: flex;
  align-items: center;
  padding-left: 5px;
  flex: none;
}
.grip {
  display: block;
  width: 2px;
  height: 18px;
  background: repeating-linear-gradient(#7f8694 0 2px, transparent 2px 4px);
}
.grip.small {
  margin-left: 5px;
  height: 14px;
}
.tool {
  width: 22px;
  height: 22px;
  flex: none;
  display: flex;
  align-items: center;
  justify-content: center;
  box-sizing: border-box;
}
.tool svg {
  width: 20px;
  height: 20px;
}
.tool.on {
  background: linear-gradient(#ffe7a6, #ffc658);
  border: 1px solid #c9963a;
}
.sep {
  height: 20px;
  flex: none;
  position: relative;
}
.sep::after {
  content: "";
  position: absolute;
  left: 45%;
  top: 0;
  bottom: 0;
  width: 1px;
  background: #a9afbb;
}
.dd {
  height: 22px;
  flex: none;
  position: relative;
}
.dd::after {
  content: "";
  position: absolute;
  left: 50%;
  top: 10px;
  margin-left: -3px;
  border: 3px solid transparent;
  border-top: 3px solid #555;
}
.combo {
  width: 215px;
  height: 19px;
  margin: 0 2px;
  box-sizing: border-box;
  flex: none;
  background: #f1f1f1;
  border: 1px solid #b4b8c0;
  position: relative;
}
.combo i {
  position: absolute;
  right: 4px;
  top: 7px;
  border: 3px solid transparent;
  border-top: 3px solid #555;
}

/* plocha */
.canvas {
  flex: 1;
  position: relative;
  margin-left: 2px;
  margin-right: 2px;
  background: #fff;
  border-top: 1px solid #8f949c;
  border-left: 1px solid #8f949c;
  min-height: 0;
}
.model {
  position: absolute;
  left: 0;
  top: 0;
  width: 1543px;
  height: 1028px;
}

/* dialog */
.dialog {
  position: absolute;
  left: 759px;
  top: 334px;
  width: 645px;
  height: 520px;
  box-sizing: border-box;
  background: #f0f0f0;
  border: 1px solid #b9b9b9;
  box-shadow: 2px 3px 10px rgba(0, 0, 0, 0.35);
  display: flex;
  flex-direction: column;
}
.dlgtitle {
  height: 25px;
  flex: none;
  background: #fff;
  display: flex;
  align-items: center;
  justify-content: space-between;
  padding: 0 10px 2px 2px;
  box-sizing: border-box;
  color: #8c8c8c;
  font-size: 12px;
}
.dlgtitle svg {
  width: 11px;
  height: 11px;
}
.tabs {
  display: flex;
  align-items: flex-end;
  height: 27px;
  flex: none;
  padding-left: 5px;
}
.tab {
  height: 18px;
  line-height: 19px;
  padding: 0 6px;
  border: 1px solid #d9d9d9;
  border-left: none;
  border-bottom: none;
  font-size: 11.5px;
  letter-spacing: -0.35px;
  color: #222;
}
.tab:nth-child(2) {
  padding: 0 8px 0 4px;
}
.tab.active {
  height: 20px;
  line-height: 17px;
  background: #fff;
  padding: 0 7px;
  border-left: 1px solid #d9d9d9;
  position: relative;
  top: 1px;
  z-index: 1;
}
.panel {
  width: 628px;
  height: 428px;
  margin-left: 7px;
  box-sizing: border-box;
  background: #fff;
  border: 1px solid #d9d9d9;
  padding: 9px 6px 0 6px;
  display: flex;
  gap: 8px;
  flex: none;
}
.left {
  width: 319px;
  flex: none;
  display: flex;
  flex-direction: column;
  gap: 11px;
}
.right {
  width: 286px;
  flex: none;
  display: flex;
  flex-direction: column;
  gap: 10px;
}
.group {
  flex: none;
}
.group.first {
  margin-bottom: -1px;
}
.ghead {
  height: 16px;
  line-height: 16px;
  padding-left: 2px;
  background: #dbe4f3;
  color: #2a5590;
  font-size: 10.5px;
  clip-path: polygon(0 0, calc(100% - 10px) 0, 100% 100%, 0 100%);
}
.gbody {
  background: #f0f3f9;
  border: 1px solid #a9b2e6;
  border-top: none;
  border-left-color: #d3d9f0;
  padding: 4px 3px 4px 2px;
  box-sizing: border-box;
}
.gbody.short {
  padding-top: 3px;
  padding-bottom: 4px;
}
.gbody.mat {
  padding-top: 3px;
  padding-bottom: 2px;
}
.field {
  height: 20px;
  line-height: 18px;
  box-sizing: border-box;
  border: 1px solid #7a7a7a;
  background: #fff;
  padding-left: 2px;
  font-size: 11.5px;
  letter-spacing: -0.32px;
  color: #111;
}
.field.ro {
  background: #f0f0f0;
}
.grow {
  flex: 1;
  min-width: 0;
}
.linie {
  display: flex;
  align-items: center;
  gap: 2px;
  height: 29px;
  padding-top: 4px;
  padding-bottom: 4px;
}
.ibtn {
  width: 25px;
  height: 21px;
  flex: none;
  box-sizing: border-box;
  background: #d6d6d6;
  border: 1px solid #c6c6c6;
  display: inline-flex;
  align-items: center;
  justify-content: center;
}
.ibtn svg {
  width: 17px;
  height: 17px;
  opacity: 0.85;
}
.ibtn.on {
  background: #e1e1e1;
  border-color: #adadad;
}
.ibtn.on svg {
  opacity: 1;
}
.redframe {
  width: 30px;
  height: 27px;
  margin-left: -1px;
  box-sizing: border-box;
  border: 3px solid #e0000f;
  display: flex;
  flex: none;
}
.redframe .ibtn {
  width: 24px;
  height: 21px;
  border: none;
}
.select {
  height: 21px;
  box-sizing: border-box;
  border: 1px solid #7a7a7a;
  background: #fff;
  position: relative;
  display: flex;
  align-items: center;
  letter-spacing: -0.3px;
}
.select.off {
  border-color: #d0d0d0;
  padding: 3px;
}
.selfill {
  display: block;
  width: 289px;
  height: 100%;
  background: #efefef;
}
.chev {
  position: absolute;
  right: 4px;
  top: 5px;
  width: 6px;
  height: 6px;
  border-right: 1px solid #aaa;
  border-bottom: 1px solid #aaa;
  transform: rotate(45deg);
}
.chev.dark {
  border-color: #333;
}
.btnrow {
  display: flex;
  justify-content: flex-end;
  gap: 5px;
  margin-top: 5px;
}
.thick {
  height: 91px;
  padding-top: 4px;
}
.thickrow {
  display: flex;
  align-items: center;
}
.thickrow:first-child {
  height: 21px;
}
.thickrow.sub {
  height: 21px;
  margin-top: 2px;
}
.thickrow.var {
  height: 21px;
  margin-top: 13px;
}
.muted {
  color: #8f8f8f;
  letter-spacing: -0.1px;
  font-size: 11px;
}
.radio {
  width: 11px;
  height: 11px;
  border: 1px solid #bbb;
  border-radius: 50%;
  background: #fff;
  margin: 0 2px 0 1px;
  position: relative;
  flex: none;
}
.radio.checked::after {
  content: "";
  position: absolute;
  inset: 2px;
  border-radius: 50%;
  background: #b4b4b4;
}
.push {
  margin-left: auto;
}
.dlabel {
  margin-left: 19px;
  width: 72px;
  flex: none;
}
.varlabel {
  width: 76px;
  flex: none;
}
.spin {
  width: 98px;
  height: 20px;
  box-sizing: border-box;
  border: 1px solid #8ba5c6;
  background: #fff;
  position: relative;
  margin-right: 4px;
  flex: none;
}
.spinfill {
  position: absolute;
  left: 2px;
  top: 2px;
  width: 52px;
  height: 14px;
  background: #efefef;
}
.spin .chev {
  right: 33px;
  top: 4px;
}
.spinbtns {
  position: absolute;
  right: 11px;
  top: 1px;
  width: 12px;
  height: 16px;
  background: #e8e8e8;
}
.spinbtns b {
  position: absolute;
  left: 3px;
  border: 3px solid transparent;
}
.spinbtns .up {
  top: -1px;
  border-bottom: 3px solid #555;
}
.spinbtns .down {
  bottom: -1px;
  border-top: 3px solid #555;
}
.spinright {
  position: absolute;
  right: 1px;
  top: 1px;
  width: 8px;
  height: 16px;
  background: #e8e8e8;
}
.spinright::after {
  content: "";
  position: absolute;
  left: 3px;
  top: 5px;
  border: 3px solid transparent;
  border-left: 3px solid #555;
}
.typ {
  height: 57px;
  padding: 4px 3px 0 1px;
}
.typrow {
  display: flex;
  align-items: center;
  height: 21px;
  margin-bottom: 5px;
}
.typrow label {
  width: 58px;
  flex: none;
  font-size: 11px;
  letter-spacing: -0.25px;
}
.select.wide {
  width: 194px;
  flex: none;
  margin-right: 3px;
}
.swatch {
  width: 12px;
  height: 12px;
  margin: 0 3px 0 3px;
  border: 1px solid #555;
  flex: none;
}
.violet {
  background: #8080ff;
}
.teal {
  background: #99cccc;
}
.preview {
  height: 325px;
  box-sizing: border-box;
  border-top: 1px solid #a0a0a0;
  border-left: 1px solid #a0a0a0;
  background: linear-gradient(215deg, #fff3d2 0%, #fffaf0 45%, #ffffff 100%);
  position: relative;
}
.prevtext {
  position: absolute;
  left: 2px;
  top: 2px;
  font-size: 10.5px;
  color: #222;
}
.prevpic {
  position: absolute;
  left: -1px;
  top: -1px;
  width: 286px;
  height: 325px;
}
.dlgfoot {
  display: flex;
  align-items: center;
  padding: 10px 7px 0 6px;
  gap: 10px;
}
.ibtn.foot {
  background: #e1e1e1;
  border-color: #adadad;
}
.ibtn.foot svg {
  opacity: 1;
}
.spacer {
  flex: 1;
}
.pbtn {
  width: 73px;
  height: 21px;
  box-sizing: border-box;
  background: #e1e1e1;
  border: 1px solid #adadad;
  text-align: center;
  line-height: 19px;
  letter-spacing: -0.2px;
}
.pbtn.primary {
  border: 2px solid #0078d7;
  line-height: 17px;
  font-size: 12px;
}

/* stavovy radek */
.statusbar {
  height: 23px;
  flex: none;
  background: linear-gradient(#f2f2f2 0%, #c6cacf 25%, #b2b6bc 60%, #c9cdd2 100%);
  display: flex;
  align-items: center;
  position: relative;
  font-size: 11px;
}
.ready {
  margin-left: 5px;
  margin-top: 3px;
  width: 754px;
  flex: none;
}
.flags {
  display: flex;
  height: 19px;
  margin-top: 2px;
}
.flag {
  box-sizing: border-box;
  border: 1px solid;
  border-color: #2a2a2a #f6f6f6 #f6f6f6 #2a2a2a;
  line-height: 17px;
  padding-left: 1px;
  font-size: 11.5px;
  letter-spacing: -0.25px;
  color: #2f2f4a;
  overflow: hidden;
}
.flag.up {
  border-color: #f6f6f6 #777 #777 #f6f6f6;
  line-height: 14px;
  padding-left: 2px;
}
.f-UCHOP { width: 46px; }
.f-RASTR { width: 46px; }
.f-KARTEZ { width: 51px; }
.f-OUCHOP { width: 56px; }
.f-VLINIE { width: 43px; }
.f-DXF { width: 28px; }
.cell {
  width: 1px;
  height: 16px;
  background: #a0a4aa;
  border-right: 1px solid #e4e4e4;
  margin-top: 3px;
}
.c1 { margin-left: 190px; }
.c2 { margin-left: 55px; }
.c3 { margin-left: 75px; }
.resize {
  position: absolute;
  right: 1px;
  bottom: 1px;
  width: 11px;
  height: 11px;
  background: repeating-linear-gradient(135deg, transparent 0 2px, #8a8e94 2px 3px);
}
</style>

<style>
html, body {
  margin: 0;
  background: #fff;
}
</style>
